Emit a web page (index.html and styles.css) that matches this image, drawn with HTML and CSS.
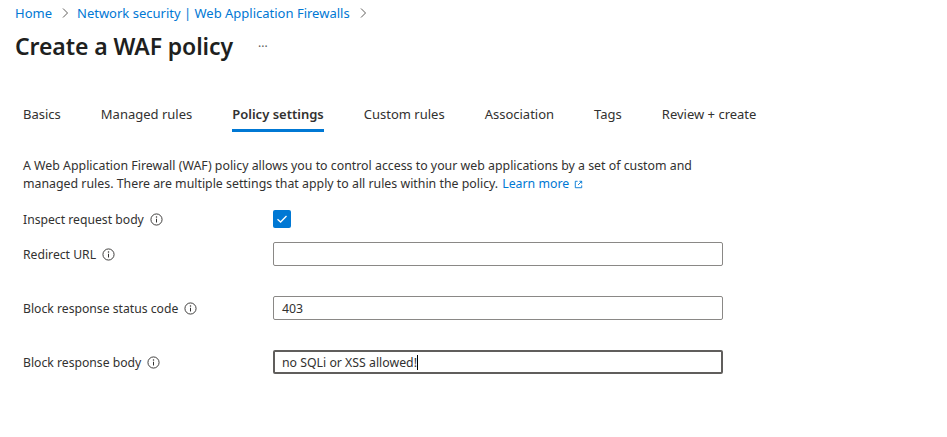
FILE: index.html
```html
<!DOCTYPE html>
<html lang="en">
<head>
<meta charset="utf-8">
<title>Create a WAF policy</title>
<link rel="stylesheet" href="styles.css">
</head>
<body>
<nav class="breadcrumb">
  <a class="crumb" href="#">Home</a>
  <svg class="chev" viewBox="0 0 8 12" width="8" height="12"><path d="M2 1.5 L6.5 6 L2 10.5" fill="none" stroke="#605e5c" stroke-width="1"/></svg>
  <a class="crumb" href="#">Network security | Web Application Firewalls</a>
  <svg class="chev" viewBox="0 0 8 12" width="8" height="12"><path d="M2 1.5 L6.5 6 L2 10.5" fill="none" stroke="#605e5c" stroke-width="1"/></svg>
</nav>
<header class="title-row">
  <h1 class="title">Create a WAF policy</h1>
  <span class="more">···</span>
</header>
<div class="tabs">
  <span class="tab">Basics</span>
  <span class="tab">Managed rules</span>
  <span class="tab active">Policy settings</span>
  <span class="tab">Custom rules</span>
  <span class="tab">Association</span>
  <span class="tab">Tags</span>
  <span class="tab">Review + create</span>
</div>
<main class="content">
  <div class="desc">
    <div class="desc-line">A Web Application Firewall (WAF) policy allows you to control access to your web applications by a set of custom and</div>
    <div class="desc-line"><span>managed rules. There are multiple settings that apply to all rules within the policy.</span><a class="learn" href="#">Learn more</a><svg class="ext" viewBox="0 0 12 12" width="11" height="11"><path d="M5 2.5 H2.5 V9.5 H9.5 V7" fill="none" stroke="#0078d4" stroke-width="1"/><path d="M7 2.5 H9.5 V5 M9.5 2.5 L5.5 6.5" fill="none" stroke="#0078d4" stroke-width="1"/></svg></div>
  </div>

  <div class="row row-check">
    <label class="label">Inspect request body <svg class="info" viewBox="0 0 14 14" width="13" height="13"><circle cx="7" cy="7" r="6" fill="none" stroke="#323130" stroke-width="1"/><circle cx="7" cy="4.3" r="0.8" fill="#323130"/><path d="M7 6.2 V10.2" stroke="#323130" stroke-width="1.1"/></svg></label>
    <span class="checkbox"><svg viewBox="0 0 18 18" width="18" height="18"><path d="M4.5 9.2 L7.6 12 L13.5 6" fill="none" stroke="#fff" stroke-width="1.3"/></svg></span>
  </div>

  <div class="row row-redirect">
    <label class="label">Redirect URL <svg class="info" viewBox="0 0 14 14" width="13" height="13"><circle cx="7" cy="7" r="6" fill="none" stroke="#323130" stroke-width="1"/><circle cx="7" cy="4.3" r="0.8" fill="#323130"/><path d="M7 6.2 V10.2" stroke="#323130" stroke-width="1.1"/></svg></label>
    <div class="input"></div>
  </div>

  <div class="row row-gap">
    <label class="label">Block response status code <svg class="info" viewBox="0 0 14 14" width="13" height="13"><circle cx="7" cy="7" r="6" fill="none" stroke="#323130" stroke-width="1"/><circle cx="7" cy="4.3" r="0.8" fill="#323130"/><path d="M7 6.2 V10.2" stroke="#323130" stroke-width="1.1"/></svg></label>
    <div class="input">403</div>
  </div>

  <div class="row row-gap">
    <label class="label">Block response body <svg class="info" viewBox="0 0 14 14" width="13" height="13"><circle cx="7" cy="7" r="6" fill="none" stroke="#323130" stroke-width="1"/><circle cx="7" cy="4.3" r="0.8" fill="#323130"/><path d="M7 6.2 V10.2" stroke="#323130" stroke-width="1.1"/></svg></label>
    <div class="input focused">no SQLi or XSS allowed!<span class="caret"></span></div>
  </div>
</main>
</body>
</html>
```
FILE: styles.css
```css
* { box-sizing: border-box; }
body {
  margin: 0;
  background: #fff;
  font-family: "Noto Sans", "Open Sans", sans-serif;
  color: #323130;
  font-size: 13px;
}
a { text-decoration: none; }
.breadcrumb {
  display: flex;
  align-items: center;
  padding: 1px 0 0 15px;
  height: 24px;
  font-size: 13px;
}
.crumb { color: #0078d4; }
.chev { margin: 1px 8px 0 9px; }
.title-row {
  display: flex;
  align-items: center;
  padding-left: 15px;
  margin-top: 5px;
  height: 34px;
}
.title {
  margin: 0;
  font-size: 23px;
  font-weight: 600;
  color: #201f1e;
  letter-spacing: -0.1px;
}
.more {
  margin-left: 25px;
  color: #605e5c;
  font-size: 12px;
}
.tabs {
  display: flex;
  gap: 40px;
  padding-left: 23px;
  margin-top: 33px;
  height: 39px;
}
.tab {
  font-size: 13px;
  color: #323130;
  height: 36px;
  display: flex;
  align-items: center;
  border-bottom: 3px solid transparent;
  padding-top: 3px;
}
.tab.active {
  font-weight: 600;
  border-bottom-color: #0078d4;
}
.content { padding-left: 23px; }
.desc {
  margin-top: 22px;
  line-height: 18px;
  font-size: 12.35px;
}
.desc-line { display: flex; align-items: center; white-space: nowrap; }
.learn { color: #0078d4; margin-left: 4px; }
.ext { margin-left: 4px; }
.row {
  display: flex;
  align-items: center;
}
.label {
  width: 250px;
  display: flex;
  align-items: center;
  gap: 6px;
  font-size: 12.2px;
}
.row-check { margin-top: 17px; height: 18px; }
.row-redirect { margin-top: 14px; }
.row-gap { margin-top: 30px; }
.checkbox {
  width: 18px;
  height: 18px;
  background: #0078d4;
  border-radius: 2px;
  display: block;
}
.checkbox svg { display: block; }
.input {
  width: 450px;
  height: 24px;
  border: 1px solid #8a8886;
  border-radius: 2px;
  padding: 0 8px;
  display: flex;
  align-items: center;
  font-size: 12.3px;
  color: #323130;
}
.input.focused {
  border: 2px solid #605e5c;
  padding-left: 7px;
}
.caret {
  display: inline-block;
  width: 1px;
  height: 15px;
  background: #000;
}
```
